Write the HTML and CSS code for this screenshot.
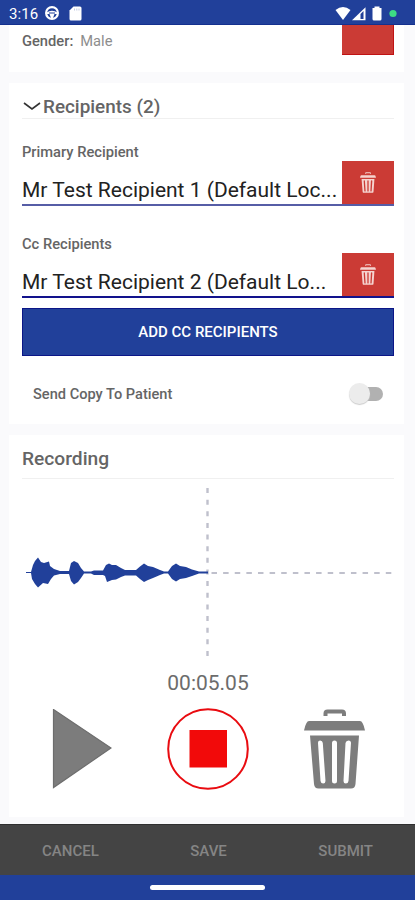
FILE: index.html
```html
<!DOCTYPE html>
<html lang="en">
<head>
<meta charset="utf-8">
<meta name="viewport" content="width=device-width, initial-scale=1">
<title>Recipients and recording</title>
<link rel="stylesheet" href="styles.css">
</head>
<body>
<svg width="0" height="0" class="defs" aria-hidden="true">
  <symbol id="trash" viewBox="0 0 61 80">
    <path d="M21.500 7V4.500Q21.500 2.500 23.500 2.500H38Q40 2.500 40 4.500V7" fill="none" stroke="currentColor" stroke-width="4"/>
    <path d="M5 12H56Q59 12 61 21.500H0Q2 12 5 12Z" fill="currentColor"/>
    <path fill="currentColor" fill-rule="evenodd" d="M6 26.500H55L51.500 75Q51 79.500 47 79.500H14.500Q10.500 79.500 10 75ZM14 34L16.500 72Q17 74.500 19.200 74.500T21.500 72L18.800 34Q18.500 31.500 16.200 31.500T14 34ZM28 34V72Q28 74.500 30.500 74.500T33 72V34Q33 31.500 30.500 31.500T28 34ZM41.500 34L39.500 72Q39.500 74.500 41.800 74.500T44.500 72L47 34Q47 31.500 44.500 31.500T41.500 34Z"/>
  </symbol>
</svg>
<div class="screen">
  <header class="status">
    <span class="time">3:16</span>
    <svg class="status-app" width="16" height="16" viewBox="0 0 16 16"><circle cx="8" cy="8" r="5.900" fill="none" stroke="#fff" stroke-width="2.200"/><path d="M2.500 7.500Q8 4 13.500 7.500V9H10.500L9 13H7L5.500 9H2.500Z" fill="#fff"/><path d="M5 8h6" stroke="#21409a" stroke-width="1"/></svg>
    <svg class="status-sd" width="13" height="15" viewBox="0 0 13 15"><path d="M4.500 0.500H11Q12.500 .5 12.500 2V13Q12.500 14.500 11 14.500H2Q.5 14.500 .5 13V4.500Z" fill="#fff"/><path d="M5.500 2.500v2M7.800 2.500v2M10 2.500v2" stroke="#c3cbe2" stroke-width="1"/></svg>
    <svg class="status-right" width="64" height="16" viewBox="0 0 64 16"><path d="M.5 4Q8 -2 15.500 4L8 14Z" fill="#fff"/><path d="M17 14.200L30.500 1.200V14.200Z" fill="#fff"/><path d="M25.500 13V8L28.500 5V13Z" fill="#21409a"/><path d="M39.500 2V.5H44.500V2H46.500V13Q46.500 14.500 45 14.500H39Q37.500 14.500 37.500 13V2Z" fill="#fff"/><circle cx="58" cy="7.500" r="3.600" fill="#3ddc84"/></svg>
  </header>

  <main class="content">
    <section class="card patient">
      <p class="gender"><b>Gender:</b><span>Male</span></p>
      <div class="delete delete-cut"></div>
    </section>

    <section class="card recipients">
      <h2 class="heading"><svg width="18" height="9" viewBox="0 0 18 9"><path d="M1 1L9 7L17 1" fill="none" stroke="#333" stroke-width="1.600"/></svg><span>Recipients (2)</span></h2>
      <label class="label label-primary">Primary Recipient</label>
      <div class="field field-primary"><span class="value">Mr Test Recipient 1 (Default Loc...</span><button class="delete" aria-label="Delete"><svg width="16" height="21"><use href="#trash"/></svg></button></div>
      <label class="label label-cc">Cc Recipients</label>
      <div class="field"><span class="value">Mr Test Recipient 2 (Default Lo...</span><button class="delete" aria-label="Delete"><svg width="16" height="21"><use href="#trash"/></svg></button></div>
      <button class="add">ADD CC RECIPIENTS</button>
      <div class="copy"><span>Send Copy To Patient</span><span class="switch"><i></i></span></div>
    </section>

    <section class="card recording">
      <h2 class="heading">Recording</h2>
      <svg class="wave" width="372" height="172" viewBox="22 487 372 172">
        <path d="M207.500 488V657" stroke="#bfc0cc" stroke-width="2.400" stroke-dasharray="5 6.640"/>
        <path d="M211.500 573H392" stroke="#bfc0cc" stroke-width="1.800" stroke-dasharray="5.500 6.120"/>
        <path d="M26 572H31L33 565L35 561L38 557.500L41 562L44 563L49 561.500L50 566L54 569L60 571H69L71 563L74 561L78 563L81 568L84 571.500H91L94 570.500H103L106 565L109 563.500L112 565L116 565L121 568L125 570H136L140 566.500L144 563.500L148 566L153 567L160 570L164 571.500H168L172 566L176 563.500L180 566L186 567L192 569.500L199 571.500H208V573.500H199L192 576L186 578L180 579L176 581.500L172 579L168 573.500H164L160 575L153 578L148 580L144 582L140 579L136 575.500H125L121 577L116 579.500L112 580L107 582L105 576L103 575H94L91 573.500H84L81 578L78 582L74 584.500L71 581L69 574H60L54 575.500L51 579L48 584L43 583L38 587.500L35 584L32 579L31 573H26Z" fill="#21409a"/>
      </svg>
      <p class="timer">00:05.05</p>
      <div class="controls">
        <svg width="60" height="80" viewBox="0 0 60 80"><path d="M1.500 .5L59 39L1.500 78.500Z" fill="#7c7c7c" stroke="#6d6d6d" stroke-width="1.200"/></svg>
        <svg width="82" height="82" viewBox="0 0 82 82"><circle cx="41" cy="41" r="39.800" fill="none" stroke="#e90b10" stroke-width="2"/><path d="M22.500 22H60V59.500H22.500Z" fill="#f20a0a"/></svg>
        <svg class="trash-big" width="61" height="80"><use href="#trash"/></svg>
      </div>
    </section>
  </main>

  <nav class="actions"><span>CANCEL</span><span>SAVE</span><span>SUBMIT</span></nav>
  <footer class="gesture"><i></i></footer>
</div>
</body>
</html>
```
FILE: styles.css
```css
* { box-sizing: border-box; }
body { margin: 0; background: #fafafc; font-family: Roboto, "Liberation Sans", sans-serif; color: #656565; }
p, h2 { margin: 0; }
button { border: 0; padding: 0; font-family: inherit; }
svg { display: block; flex: none; }
.defs { position: absolute; }
.screen { width: 415px; height: 900px; display: flex; flex-direction: column; overflow: hidden; }

.status { height: 25px; flex: none; display: flex; align-items: flex-start; background: #21409a; border-bottom: 1px solid #14308e; padding: 6px 16px 0 9px; color: #fff; }
.time { font-size: 15px; line-height: 17px; width: 35px; letter-spacing: .1px; }
.status-app { margin-top: -1px; }
.status-sd { margin-left: 9px; }
.status-right { margin-left: auto; }

.content { height: 799px; flex: none; display: flex; flex-direction: column; gap: 11px; padding: 0 11px 0 9px; }
.card { background: #fff; padding: 0 10px 0 13px; }
.patient { height: 47px; display: flex; justify-content: space-between; }
.gender { font-size: 14.700px; line-height: 16px; padding-top: 8px; }
.gender b { font-weight: 500; }
.gender span { margin-left: 7px; color: #8d8d8d; }
.delete { width: 52px; height: 43px; flex: none; display: flex; align-items: center; justify-content: center; background: #cb3b35; color: #f5d3cf; }
.delete-cut { height: 30px; border: solid #c01313; border-width: 0 1px 1px 0; }

.recipients { height: 341px; }
.heading { height: 36px; display: flex; align-items: center; font-size: 18.900px; line-height: 22px; font-weight: 500; padding-top: 12px; border-bottom: 1px solid #f0f0f0; }
.heading svg { margin: 0 2px 0 1px; }
.label { display: block; font-size: 14.700px; line-height: 18px; font-weight: 500; }
.label-primary { margin-top: 24px; }
.label-cc { margin-top: 29px; }
.field { height: 45px; display: flex; border-bottom: 2px solid #12128c; }
.field-primary { border-color: #565da6; }
.value { width: 320px; flex: none; padding-top: 17px; font-size: 21px; line-height: 24px; color: #222; white-space: nowrap; }
.add { display: block; width: 372px; height: 48px; margin-top: 10px; background: #21409a; border: 1px solid #0b1687; color: #fff; font-size: 15px; font-weight: 500; }
.copy { height: 68px; display: flex; align-items: center; justify-content: space-between; padding: 8px 11px 0; font-size: 14.600px; font-weight: 500; }
.switch { width: 34px; height: 23px; display: flex; align-items: center; justify-content: flex-end; position: relative; }
.switch::before { content: ""; width: 24px; height: 14px; border-radius: 7px; background: #b1b1b1; }
.switch i { position: absolute; left: 0; top: 0; width: 21px; height: 21px; border-radius: 50%; background: #ececec; box-shadow: 0 1px 1px #ccc; }

.recording { height: 382px; }
.recording .heading { height: 44px; padding-top: 5px; font-size: 19.200px; }
.wave { margin-top: 8px; }
.timer { margin-top: 11px; text-align: center; font-size: 21px; line-height: 26px; color: #6c6c6c; }
.controls { display: flex; justify-content: space-between; align-items: center; margin-top: 12px; padding: 0 29px 0 30px; }
.controls svg:nth-child(2) { margin-left: -1px; }
.trash-big { color: #7d7d7d; }

.actions { height: 51px; flex: none; display: flex; align-items: center; justify-content: space-between; padding: 1px 42px 0; background: #444; border-top: 1px solid #303030; color: #858585; font-size: 15px; font-weight: 500; }
.gesture { height: 25px; flex: none; display: flex; align-items: center; justify-content: center; background: #21409a; }
.gesture i { width: 115px; height: 5px; border-radius: 3px; background: #fff; }
```
